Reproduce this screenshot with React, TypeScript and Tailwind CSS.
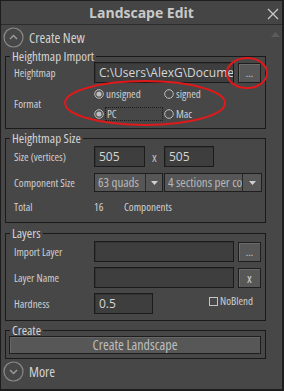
import React from "react";

const font = "font-['Open_Sans',sans-serif] font-stretch-[85%]";

function Label({ children }: { children: React.ReactNode }) {
  return <div className="w-[80px] shrink-0 text-[11px] leading-[14px] text-[#cfcfcf]">{children}</div>;
}

function Input({ value, w }: { value?: string; w: string }) {
  return (
    <div
      className={`${w} h-full shrink-0 overflow-hidden whitespace-nowrap border border-[#1b1b1b] bg-[#3e3e3e] pl-[4px] text-[12px] leading-[19px] text-[#d6d6d6] font-stretch-[100%] shadow-[inset_1px_1px_0_#343434]`}
    >
      {value}
    </div>
  );
}

function Btn({ children, big }: { children: React.ReactNode; big?: boolean }) {
  return (
    <div
      className={`ml-[4px] flex h-[20px] w-[23px] shrink-0 items-center justify-center border border-[#1e1e1e] bg-[#575757] text-[#cfcfcf] shadow-[inset_1px_1px_0_#6a6a6a] ${
        big ? "text-[13px] leading-[14px]" : "text-[11px] leading-[12px]"
      }`}
    >
      {children}
    </div>
  );
}

function Dropdown({ text, w, arrowW }: { text: string; w: string; arrowW: string }) {
  return (
    <div className={`${w} flex h-full shrink-0 border border-[#1e1e1e] bg-[#565656]`}>
      <div className="min-w-0 flex-1 overflow-hidden whitespace-nowrap pl-[3px] text-[13px] leading-[17px] text-[#b8b8b8]">
        {text}
      </div>
      <div className={`${arrowW} flex shrink-0 items-center justify-center border-l border-[#2a2a2a]`}>
        <svg width="7" height="4" viewBox="0 0 7 4">
          <path d="M0 0 L7 0 L3.5 4 Z" fill="#d0d0d0" />
        </svg>
      </div>
    </div>
  );
}

function Radio({ checked, label, focus }: { checked?: boolean; label: string; focus?: boolean }) {
  return (
    <div className="flex items-center">
      <svg width="10" height="10" viewBox="0 0 10 10" className="shrink-0">
        <circle cx="5" cy="5" r="4.3" fill="#4a4a4a" stroke="#bdbdbd" strokeWidth="1" />
        {checked && <circle cx="5" cy="5" r="2.6" fill="#bdbdbd" />}
      </svg>
      <span
        className={`ml-[1px] text-[11px] leading-[12px] text-[#cfcfcf] ${
          focus ? "w-[58px] border border-dotted border-[#1c1c1c] pl-[1px]" : "pl-[1px]"
        }`}
      >
        {label}
      </span>
    </div>
  );
}

function Group({
  title,
  className,
  children,
}: {
  title: string;
  className?: string;
  children: React.ReactNode;
}) {
  return (
    <fieldset className={`ml-[4px] w-[261px] border border-[#1a1a1a] ${className ?? ""}`}>
      <legend className="ml-[4px] px-[2px] text-[13px] leading-[12px] text-[#d4d4d4]">{title}</legend>
      {children}
    </fieldset>
  );
}

function CircleIcon({ up }: { up?: boolean }) {
  return (
    <svg width="21" height="21" viewBox="0 0 21 21" className="shrink-0">
      <circle cx="10.5" cy="10.5" r="9.5" fill="none" stroke="#8a8a8a" strokeWidth="1.2" />
      {up ? (
        <path d="M7 12 L10.5 8.5 L14 12" fill="none" stroke="#9a9a9a" strokeWidth="1.5" />
      ) : (
        <path d="M7 9 L10.5 12.5 L14 9" fill="none" stroke="#9a9a9a" strokeWidth="1.5" />
      )}
    </svg>
  );
}

export default function App() {
  return (
    <div
      className={`${font} relative h-[391px] w-[284px] overflow-hidden border-[1px] border-r-[2px] border-b-[2px] border-[#1d1d1d] bg-[#474747]`}
    >
      {/* title bar */}
      <div className="relative flex h-[24px] items-center justify-center border-b border-[#2c2c2c] bg-[#454545]">
        <span className="text-[14px] font-bold leading-[16px] text-[#c9c9c9] font-stretch-[100%]">Landscape Edit</span>
        <svg width="12" height="12" viewBox="0 0 12 12" className="absolute right-[3px] top-[7px]">
          <path d="M1 1 L11 11 M11 1 L1 11" stroke="#c8c8c8" strokeWidth="1.3" />
        </svg>
      </div>
      {/* faint scroll arrow */}
      <svg width="9" height="5" viewBox="0 0 9 5" className="absolute left-[270px] top-[31px]">
        <path d="M0 5 L4.5 0 L9 5 Z" fill="#5c5c5c" />
      </svg>

      {/* Create New */}
      <div className="flex h-[25px] items-center pl-[2px]">
        <CircleIcon up />
        <span className="ml-[5px] text-[14px] leading-[16px] text-[#d2d2d2]">Create New</span>
      </div>

      {/* Heightmap Import */}
      <Group title="Heightmap Import" className="pb-[4px]">
        <div className="pl-[8px]">
          <div className="flex h-[21px] items-center">
            <Label>Heightmap</Label>
            <Input w="w-[140px]" value="C:\Users\AlexG\Documents" />
            <Btn>...</Btn>
          </div>
          <div className="flex h-[41px] items-center">
            <Label>Format</Label>
            <div className="flex flex-col">
              <div className="flex h-[20px] items-center">
                <div className="w-[70px]">
                  <Radio checked label="unsigned" />
                </div>
                <Radio label="signed" />
              </div>
              <div className="flex h-[20px] items-center">
                <div className="w-[70px]">
                  <Radio checked label="PC" focus />
                </div>
                <Radio label="Mac" />
              </div>
            </div>
          </div>
        </div>
      </Group>

      {/* Heightmap Size */}
      <Group title="Heightmap Size" className="mt-[3px] pb-[5px]">
        <div className="pl-[8px] pt-[2px]">
          <div className="flex h-[21px] items-center">
            <Label>Size (vertices)</Label>
            <Input w="w-[51px]" value="505" />
            <div className="w-[19px] text-center text-[13px] leading-[16px] text-[#bdbdbd]">x</div>
            <Input w="w-[50px]" value="505" />
          </div>
          <div className="mt-[6px] flex h-[19px] items-center">
            <Label>Component Size</Label>
            <Dropdown text="63 quads" w="w-[69px]" arrowW="w-[17px]" />
            <div className="ml-[1px] flex h-[19px]">
              <Dropdown text="4 sections per component" w="w-[98px]" arrowW="w-[19px]" />
            </div>
          </div>
          <div className="mt-[5px] flex h-[20px] items-center text-[11px] leading-[14px] text-[#cfcfcf]">
            <Label>Total</Label>
            <span className="w-[30px]">16</span>
            <span>Components</span>
          </div>
        </div>
      </Group>

      {/* Layers */}
      <Group title="Layers" className="mt-[4px] pb-[6px]">
        <div className="pl-[8px] pt-[2px]">
          <div className="flex h-[21px] items-center">
            <Label>Import Layer</Label>
            <Input w="w-[140px]" />
            <Btn>...</Btn>
          </div>
          <div className="mt-[5px] flex h-[21px] items-center">
            <Label>Layer Name</Label>
            <Input w="w-[140px]" />
            <Btn big>x</Btn>
          </div>
          <div className="mt-[5px] flex h-[21px] items-center">
            <Label>Hardness</Label>
            <Input w="w-[59px]" value="0.5" />
            <div className="ml-[56px] flex items-center self-start pt-[2px]">
              <div className="h-[9px] w-[9px] border border-[#c4c4c4]" />
              <span className="ml-[2px] text-[11px] leading-[12px] text-[#cfcfcf]">NoBlend</span>
            </div>
          </div>
        </div>
      </Group>

      {/* Create */}
      <Group title="Create" className="mt-[3px] pb-[4px]">
        <div className="px-[3px]">
          <div className="flex h-[18px] w-[252px] items-center justify-center border border-[#1e1e1e] bg-[#575757] text-[14px] leading-[16px] text-[#bebebe] shadow-[inset_1px_1px_0_#666]">
            Create Landscape
          </div>
        </div>
      </Group>

      {/* More */}
      <div className="mt-[2px] flex h-[21px] items-center pl-[2px]">
        <CircleIcon />
        <span className="ml-[5px] text-[14px] leading-[16px] text-[#d2d2d2]">More</span>
      </div>

      {/* red annotation ellipses */}
      <svg width="284" height="391" viewBox="0 0 284 391" className="pointer-events-none absolute left-[-1px] top-[-1px]">
        <ellipse cx="247" cy="73" rx="20" ry="15" fill="none" stroke="#e0191b" strokeWidth="2" />
        <ellipse cx="145" cy="103" rx="80" ry="22" fill="none" stroke="#e0191b" strokeWidth="2" />
      </svg>
    </div>
  );
}
